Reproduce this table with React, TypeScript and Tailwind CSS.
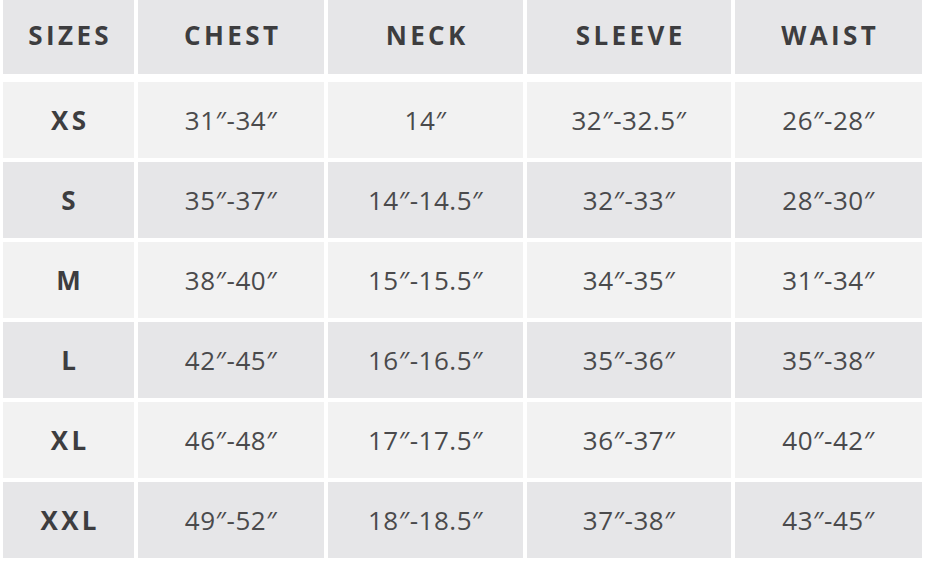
import React from 'react';

const headers = ['SIZES', 'CHEST', 'NECK', 'SLEEVE', 'WAIST'];

const rows: string[][] = [
  ['XS', '31″-34″', '14″', '32″-32.5″', '26″-28″'],
  ['S', '35″-37″', '14″-14.5″', '32″-33″', '28″-30″'],
  ['M', '38″-40″', '15″-15.5″', '34″-35″', '31″-34″'],
  ['L', '42″-45″', '16″-16.5″', '35″-36″', '35″-38″'],
  ['XL', '46″-48″', '17″-17.5″', '36″-37″', '40″-42″'],
  ['XXL', '49″-52″', '18″-18.5″', '37″-38″', '43″-45″'],
];

const cols = 'grid grid-cols-[131px_186px_195px_204px_187px] gap-x-1';

const App: React.FC = () => {
  return (
    <div className="w-[926px] h-[562px] bg-white pl-[3px] font-['Open_Sans',sans-serif] text-[#414143]">
      {/* Header */}
      <div className={`${cols} h-[74px]`}>
        {headers.map(h => (
          <div key={h} className="bg-[#e6e6e8] flex items-center justify-center pb-[3px]">
            <span className="text-[26px] font-bold tracking-[0.13em] pl-[0.13em] text-[#3d3d3f]">{h}</span>
          </div>
        ))}
      </div>

      {/* Body */}
      <div className="mt-2 flex flex-col gap-1">
        {rows.map((r, i) => (
          <div key={r[0]} className={`${cols} h-[76px]`}>
            {r.map((cell, j) => (
              <div
                key={j}
                className={`flex items-center justify-center ${i % 2 === 0 ? 'bg-[#f2f2f2]' : 'bg-[#e6e6e8]'}`}
              >
                {j === 0 ? (
                  <span className="text-[26px] font-bold tracking-[0.13em] pl-[0.13em] text-[#3d3d3f]">{cell}</span>
                ) : (
                  <span className="text-[26px] font-normal tracking-[0.02em] text-[#4a4a4c]">{cell}</span>
                )}
              </div>
            ))}
          </div>
        ))}
      </div>
    </div>
  );
};

export default App;
